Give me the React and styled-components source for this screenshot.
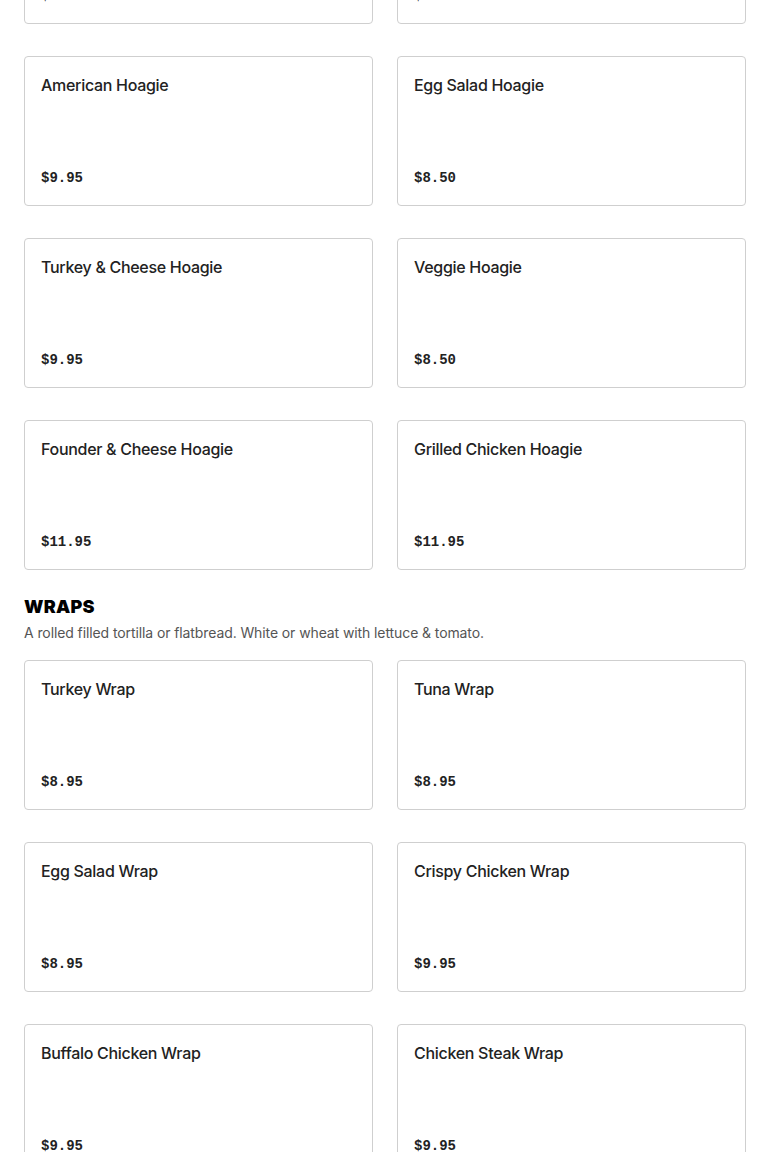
import React from 'react';
import styled, { createGlobalStyle } from 'styled-components';

const GlobalStyle = createGlobalStyle`
  html, body { margin: 0; padding: 0; background: #fff; }
  body { font-family: Inter, "Noto Sans", sans-serif; color: #222; }
`;

const Page = styled.main`
  padding: 0 24px;
  margin-top: -126px;
`;

const Grid = styled.div`
  display: grid;
  grid-template-columns: 1fr 1fr;
  column-gap: 24px;
  row-gap: 32px;
`;

const Card = styled.div`
  height: 150px;
  box-sizing: border-box;
  border: 1px solid #cfcfcf;
  border-radius: 4px;
  padding: 16px 16px 15px;
  display: flex;
  flex-direction: column;
  justify-content: space-between;
`;

const Name = styled.div`
  font-size: 16px;
  line-height: 24px;
  font-weight: 500;
  letter-spacing: -0.3px;
  color: #222;
`;

const Price = styled.div`
  font-family: "Liberation Mono", monospace;
  font-size: 14px;
  line-height: 24px;
  font-weight: 700;
  color: #222;
`;

const SectionTitle = styled.h2`
  margin: 25px 0 4px;
  font-size: 18px;
  line-height: 24px;
  font-weight: 900;
  letter-spacing: 0.2px;
  color: #000;
`;

const SectionNote = styled.p`
  margin: 0 0 17px;
  font-size: 14px;
  line-height: 20px;
  letter-spacing: -0.1px;
  color: #555;
`;

const hoagies = [
  ['Italian Hoagie', '$7.95'],
  ['Ham & Cheese Hoagie', '$7.95'],
  ['American Hoagie', '$9.95'],
  ['Egg Salad Hoagie', '$8.50'],
  ['Turkey & Cheese Hoagie', '$9.95'],
  ['Veggie Hoagie', '$8.50'],
  ['Founder & Cheese Hoagie', '$11.95'],
  ['Grilled Chicken Hoagie', '$11.95'],
];

const wraps = [
  ['Turkey Wrap', '$8.95'],
  ['Tuna Wrap', '$8.95'],
  ['Egg Salad Wrap', '$8.95'],
  ['Crispy Chicken Wrap', '$9.95'],
  ['Buffalo Chicken Wrap', '$9.95'],
  ['Chicken Steak Wrap', '$9.95'],
];

const Items = ({ list }) => (
  <Grid>
    {list.map(([name, price]) => (
      <Card key={name}>
        <Name>{name}</Name>
        <Price>{price}</Price>
      </Card>
    ))}
  </Grid>
);

export default function App() {
  return (
    <>
      <GlobalStyle />
      <Page>
        <Items list={hoagies} />
        <SectionTitle>WRAPS</SectionTitle>
        <SectionNote>A rolled filled tortilla or flatbread. White or wheat with lettuce &amp; tomato.</SectionNote>
        <Items list={wraps} />
      </Page>
    </>
  );
}
